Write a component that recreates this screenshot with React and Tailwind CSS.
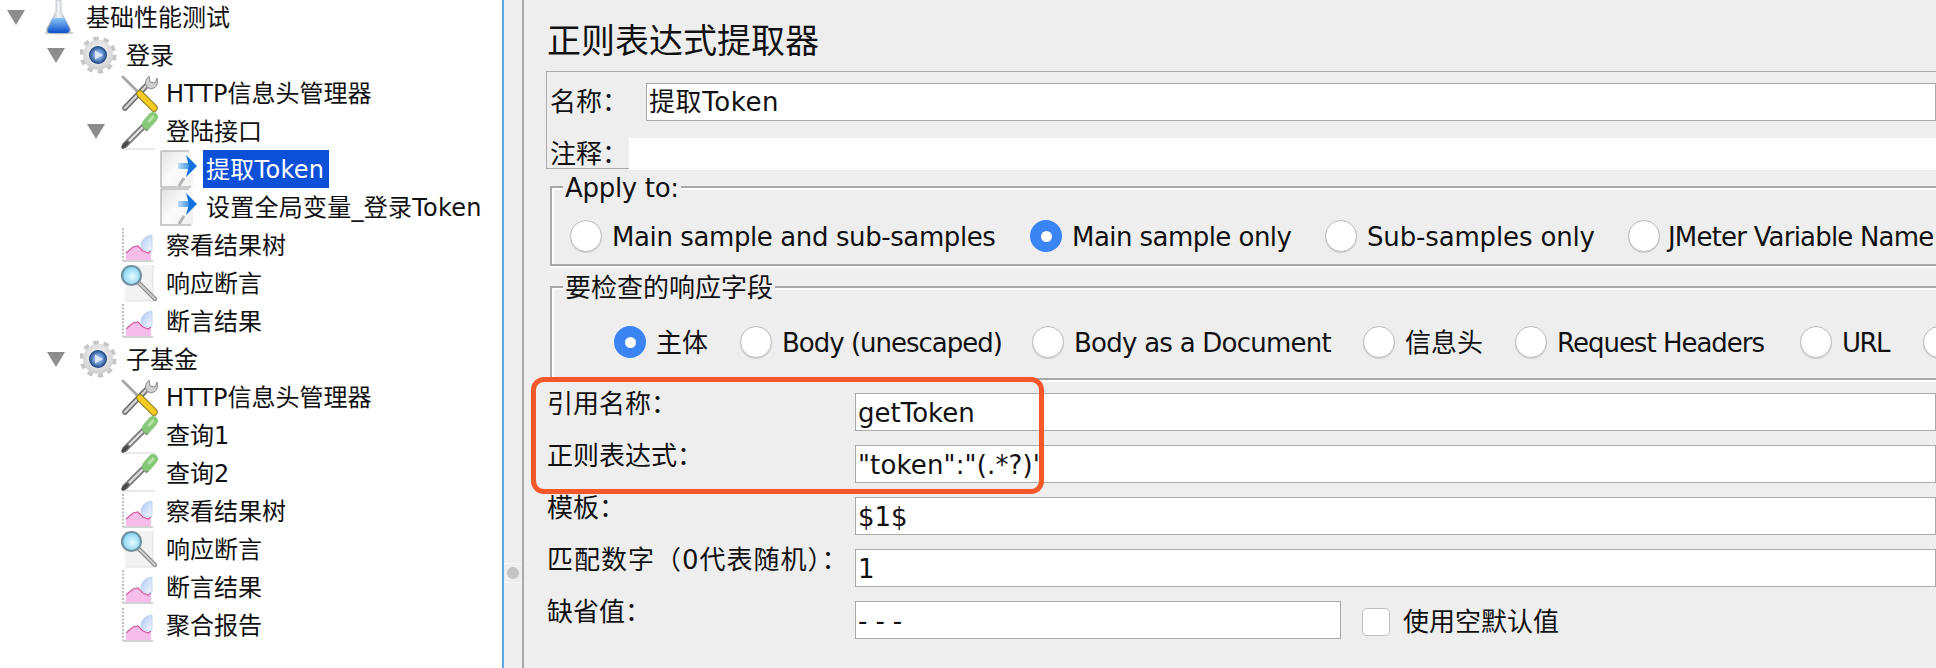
const font = 'font-["DejaVu_Sans","Noto_Sans_CJK_SC",sans-serif]';

const Arrow = () => (
  <svg width="18" height="15" viewBox="0 0 18 15">
    <polygon points="0,0 18,0 9,15" fill="#8c8c8c" />
  </svg>
);

const Flask = () => (
  <svg width="38" height="38" viewBox="0 0 38 38">
    <defs>
      <linearGradient id="liquid" x1="0" y1="0" x2="0" y2="1">
        <stop offset="0" stopColor="#8cc4f7" />
        <stop offset="1" stopColor="#0b50cc" />
      </linearGradient>
      <linearGradient id="glassTube" x1="0" y1="0" x2="1" y2="0">
        <stop offset="0" stopColor="#8f97a5" />
        <stop offset="0.5" stopColor="#f2f4f7" />
        <stop offset="1" stopColor="#9aa1ad" />
      </linearGradient>
    </defs>
    <ellipse cx="19" cy="35" rx="15" ry="1.5" fill="#c4c4c4" />
    <path d="M16 2h5v12l9 16q2 5-3 5H10q-5 0-3-5l9-16z" fill="url(#glassTube)" stroke="#b8bdc6" strokeWidth="0.8" />
    <path d="M12.5 20h12l5 11q0 4-3 4H10q-3 0-2-4z" fill="url(#liquid)" />
  </svg>
);

const Gear = () => (
  <svg width="38" height="38" viewBox="0 0 38 38">
    <defs>
      <radialGradient id="gearBody" cx="0.5" cy="0.4" r="0.6">
        <stop offset="0" stopColor="#fafafa" />
        <stop offset="1" stopColor="#cfcfcf" />
      </radialGradient>
      <radialGradient id="gearCore" cx="0.5" cy="0.5" r="0.5">
        <stop offset="0.45" stopColor="#7fa6dc" />
        <stop offset="1" stopColor="#153f80" />
      </radialGradient>
    </defs>
    <circle cx="18" cy="19" r="16" fill="none" stroke="#c6c6c6" strokeWidth="5" strokeDasharray="5.2 4.85" />
    <circle cx="18" cy="19" r="15" fill="url(#gearBody)" />
    <circle cx="18" cy="19" r="9" fill="url(#gearCore)" />
    <polygon points="15,14.5 23,19 15,23.5" fill="#dfe8f5" />
  </svg>
);

const Tools = () => (
  <svg width="38" height="38" viewBox="0 0 38 38">
    <path d="M5 34 28 10" stroke="#6f6f6f" strokeWidth="5.5" strokeLinecap="round" />
    <path d="M5 34 28 10" stroke="#d6d6d6" strokeWidth="2.5" strokeLinecap="round" />
    <path d="M27 13a7 7 0 0 1-1-7l3-4 1 6 5 1 2-5q2 7-3 10-4 2-7-1z" fill="#d0d0d0" stroke="#8c8c8c" strokeWidth="1" />
    <path d="M3 3 22 22" stroke="#a6a6a6" strokeWidth="2.8" strokeLinecap="round" />
    <path d="M20 20 34 34" stroke="#8f7a1c" strokeWidth="7.5" strokeLinecap="round" />
    <path d="M20 20 34 34" stroke="#f5cb24" strokeWidth="5.5" strokeLinecap="round" />
  </svg>
);

const Dropper = () => (
  <svg width="38" height="38" viewBox="0 0 38 38">
    <path d="M3 37h32" stroke="#e2e2e2" strokeWidth="1.5" />
    <path d="M5 33 24 14" stroke="#7a7a7a" strokeWidth="6" strokeLinecap="round" />
    <path d="M9 29 24 14" stroke="#e0e0e0" strokeWidth="2.4" />
    <path d="M3 35 7 31" stroke="#4a4a4a" strokeWidth="3.5" strokeLinecap="round" />
    <path d="M22 12 28 18" stroke="#7f947a" strokeWidth="4" />
    <path d="M27 12 33 5" stroke="#86c878" strokeWidth="10" strokeLinecap="round" />
    <path d="M29 9 33 5" stroke="#b8e2aa" strokeWidth="3" strokeLinecap="round" />
  </svg>
);

const PostProcessor = () => (
  <svg width="38" height="38" viewBox="0 0 38 38">
    <defs>
      <linearGradient id="sheet" x1="0" y1="0" x2="1" y2="1">
        <stop offset="0" stopColor="#e2e2e2" />
        <stop offset="0.5" stopColor="#fbfbfb" />
        <stop offset="1" stopColor="#f0f0f0" />
      </linearGradient>
      <linearGradient id="shaft" x1="0" y1="0" x2="1" y2="0">
        <stop offset="0" stopColor="#bcdcf8" />
        <stop offset="1" stopColor="#2c8ae6" />
      </linearGradient>
    </defs>
    <path d="M1 1h28l4 4v32H1z" fill="url(#sheet)" />
    <path d="M1 1v36h30M1 1h28" fill="none" stroke="#bcbcbc" strokeWidth="1.5" />
    <path d="M24 28 19 36" stroke="#b4b4b4" strokeWidth="3" />
    <rect x="18" y="13" width="13" height="6" fill="url(#shaft)" />
    <path d="M26 5l11 11-11 11 3-11z" fill="#1273dc" />
  </svg>
);

const Graph = () => (
  <svg width="38" height="38" viewBox="0 0 38 38">
    <defs>
      <linearGradient id="lens" x1="0" y1="0" x2="1" y2="1">
        <stop offset="0" stopColor="#a9c6f2" />
        <stop offset="1" stopColor="#f4f8ff" />
      </linearGradient>
    </defs>
    <path d="M3 2v33" stroke="#aaaaaa" strokeWidth="1.5" strokeDasharray="2 1.5" />
    <path d="M3 35h30" stroke="#c4c4c4" strokeWidth="1.5" />
    <path d="M6 34V27l7-6 5-1 5 5 5 2 3-2v9z" fill="#f6bdea" />
    <path d="M6 27l7-6 5-1 5 5 5 2 3-2" fill="none" stroke="#cf5a9a" strokeWidth="1.2" />
    <path d="M32 9q-9 1-11 9 0 7 8 7l3-1z" fill="url(#lens)" stroke="#b4cdf2" strokeWidth="0.8" />
  </svg>
);

const Magnifier = () => (
  <svg width="38" height="38" viewBox="0 0 38 38">
    <defs>
      <radialGradient id="glass" cx="0.55" cy="0.55" r="0.55">
        <stop offset="0" stopColor="#e9fbff" />
        <stop offset="1" stopColor="#7cd2f2" />
      </radialGradient>
    </defs>
    <rect x="5" y="1" width="28" height="36" fill="#f2f2f2" />
    <path d="M33 1v36H5" fill="none" stroke="#e0e0e0" strokeWidth="1" />
    <path d="M19 19 35 35" stroke="#8a8a8a" strokeWidth="4.2" strokeLinecap="round" />
    <path d="M19 19 35 35" stroke="#cfcfcf" strokeWidth="1.8" strokeLinecap="round" />
    <circle cx="11.5" cy="11.5" r="9.5" fill="url(#glass)" stroke="#70909f" strokeWidth="2.2" />
  </svg>
);

const icons = { flask: Flask, gear: Gear, tools: Tools, dropper: Dropper, post: PostProcessor, graph: Graph, lens: Magnifier };

const indent = ['pl-[7px]', 'pl-[47px]', 'pl-[87px]', 'pl-[127px]'];

const tree = [
  { level: 0, open: true, icon: 'flask', label: '基础性能测试' },
  { level: 1, open: true, icon: 'gear', label: '登录' },
  { level: 2, icon: 'tools', label: 'HTTP信息头管理器' },
  { level: 2, open: true, icon: 'dropper', label: '登陆接口' },
  { level: 3, icon: 'post', label: '提取Token', selected: true },
  { level: 3, icon: 'post', label: '设置全局变量_登录Token', track: 'tracking-[0.25px]' },
  { level: 2, icon: 'graph', label: '察看结果树' },
  { level: 2, icon: 'lens', label: '响应断言' },
  { level: 2, icon: 'graph', label: '断言结果' },
  { level: 1, open: true, icon: 'gear', label: '子基金' },
  { level: 2, icon: 'tools', label: 'HTTP信息头管理器' },
  { level: 2, icon: 'dropper', label: '查询1' },
  { level: 2, icon: 'dropper', label: '查询2' },
  { level: 2, icon: 'graph', label: '察看结果树' },
  { level: 2, icon: 'lens', label: '响应断言' },
  { level: 2, icon: 'graph', label: '断言结果' },
  { level: 2, icon: 'graph', label: '聚合报告' },
];

const Radio = ({ on }) =>
  on ? (
    <span className="flex h-[32px] w-[32px] shrink-0 items-center justify-center rounded-full bg-[#3b84f4]">
      <span className="h-[11px] w-[11px] rounded-full bg-white" />
    </span>
  ) : (
    <span className="h-[32px] w-[32px] shrink-0 rounded-full border border-[#bdbdbd] bg-white shadow-[0_1px_1px_#00000022]" />
  );

const applyTo = [
  { label: 'Main sample and sub-samples', w: 'w-[460px]', track: 'tracking-[-0.4px]' },
  { label: 'Main sample only', w: 'w-[295px]', on: true, track: 'tracking-[-0.55px]' },
  { label: 'Sub-samples only', w: 'w-[303px]', track: 'tracking-[-0.15px]' },
  { label: 'JMeter Variable Name', w: 'w-[300px]', track: '-ml-[2px] tracking-[-0.8px]' },
];

const fields = [
  { label: '主体', w: 'w-[126px]', on: true },
  { label: 'Body (unescaped)', w: 'w-[292px]', track: 'tracking-[-1px]' },
  { label: 'Body as a Document', w: 'w-[331px]', track: 'tracking-[-0.75px]' },
  { label: '信息头', w: 'w-[152px]' },
  { label: 'Request Headers', w: 'w-[285px]', track: 'tracking-[-1px]' },
  { label: 'URL', w: 'w-[123px]', track: 'tracking-[-1.5px]' },
  { label: '', w: 'w-[40px]' },
];

const regexRows = [
  { label: '引用名称：', value: 'getToken' },
  { label: '正则表达式：', value: '"token":"(.*?)"', track: 'tracking-[0.15px]' },
  { label: '模板：', value: '$1$' },
  { label: '匹配数字（0代表随机）：', value: '1', labelTrack: 'tracking-[1px]' },
];

const Group = ({ title, items, pad, titleTrack = '' }) => (
  <div className="relative ml-[26px] border-y-2 border-l-2 border-[#a8a8a8] shadow-[inset_2px_2px_0_#ffffff,0_2px_0_#ffffff]">
    <span className={`absolute -top-[15px] left-[11px] bg-[#eeeeee] px-[2px] pt-[1px] leading-[28px] ${titleTrack}`}>{title}</span>
    <div className={`flex items-center ${pad}`}>
      {items.map((item, i) => (
        <div key={i} className={`flex shrink-0 items-center gap-[10px] whitespace-nowrap ${item.w}`}>
          <Radio on={item.on} />
          <span className={`pt-[2px] ${item.track || ''}`}>{item.label}</span>
        </div>
      ))}
    </div>
  </div>
);

const TextBox = ({ children, className = 'flex-1', track = '' }) => (
  <div className={`flex h-[38px] items-center border border-[#aaaaaa] bg-white pl-[2px] pt-[2px] ${track} ${className}`}>{children}</div>
);

export default function App() {
  return (
    <div className={`flex h-[668px] w-[1936px] overflow-hidden bg-white text-[#111111] ${font}`}>
      {/* test plan tree */}
      <div className="-mt-[2px] w-[502px] shrink-0 text-[24px]">
        {tree.map((node, i) => {
          const Icon = icons[node.icon];
          return (
            <div key={i} className={`flex h-[38px] items-center whitespace-nowrap ${indent[node.level]}`}>
              <span className="flex w-[33px] shrink-0">{node.open && <Arrow />}</span>
              <span className="w-[47px] shrink-0"><Icon /></span>
              {node.selected ? (
                <span className="-ml-[4px] flex h-[38px] items-center bg-[#0d50d8] pl-[3px] pr-[5px] pt-[2px] tracking-[0.3px] text-white">{node.label}</span>
              ) : (
                <span className={`-ml-[1px] pt-[2px] ${node.track || ''}`}>{node.label}</span>
              )}
            </div>
          );
        })}
      </div>

      {/* splitter */}
      <div className="flex w-[22px] shrink-0 flex-col border-x-2 border-l-[#5aa8ea] border-r-[#a9a9a9] bg-[#eeeeee]">
        <div className="mt-[563px] flex h-[20px] items-center justify-center border-y border-[#f8f8f8]">
          <span className="h-[12px] w-[12px] rounded-full bg-[#c4c4c4]" />
        </div>
      </div>

      {/* regex extractor form */}
      <div className="relative min-w-0 flex-1 bg-[#eeeeee] text-[26px]">
        <div className="flex h-[71px] items-center pl-[23px] pt-[11px] text-[34px]">正则表达式提取器</div>

        <div className="ml-[22px] h-[98px] border-y border-l border-[#aaaaaa] pt-[9px]">
          <div className="flex items-center pl-[3px]">
            <span className="w-[96px] shrink-0 pt-[2px]">名称：</span>
            <TextBox track="tracking-[0.6px]">提取Token</TextBox>
          </div>
          <div className="mt-[16px] flex h-[32px] items-center pl-[3px]">
            <span className="w-[79px] shrink-0">注释：</span>
            <div className="h-full flex-1 bg-white" />
          </div>
        </div>

        <div className="mt-[17px]">
          <Group title="Apply to:" titleTrack="tracking-[-0.3px]" items={applyTo} pad="h-[76px] pl-[18px] pt-[20px]" />
        </div>
        <div className="mt-[20px]">
          <Group title="要检查的响应字段" items={fields} pad="h-[90px] pl-[62px] pt-[18px]" />
        </div>

        <div className="mt-[13px] flex flex-col gap-[14px] pl-[23px]">
          {regexRows.map((row) => (
            <div key={row.label} className="flex">
              <span className={`mt-[1px] h-[20px] w-[308px] shrink-0 whitespace-nowrap leading-[20px] ${row.labelTrack || ''}`}>{row.label}</span>
              <TextBox track={row.track}>{row.value}</TextBox>
            </div>
          ))}
          <div className="flex">
            <span className="mt-[1px] h-[20px] w-[308px] shrink-0 leading-[20px]">缺省值：</span>
            <TextBox className="w-[486px] shrink-0" track="tracking-[8px]">---</TextBox>
            <div className="ml-[21px] flex items-center gap-[13px]">
              <span className="h-[28px] w-[28px] rounded-[5px] border border-[#bdbdbd] bg-white" />
              <span className="pt-[2px]">使用空默认值</span>
            </div>
          </div>
        </div>

        {/* annotation drawn over the screenshot */}
        <div className="absolute left-[7px] top-[377px] h-[117px] w-[513px] rounded-[13px] border-[5px] border-[#f4572a]" />
      </div>
    </div>
  );
}
